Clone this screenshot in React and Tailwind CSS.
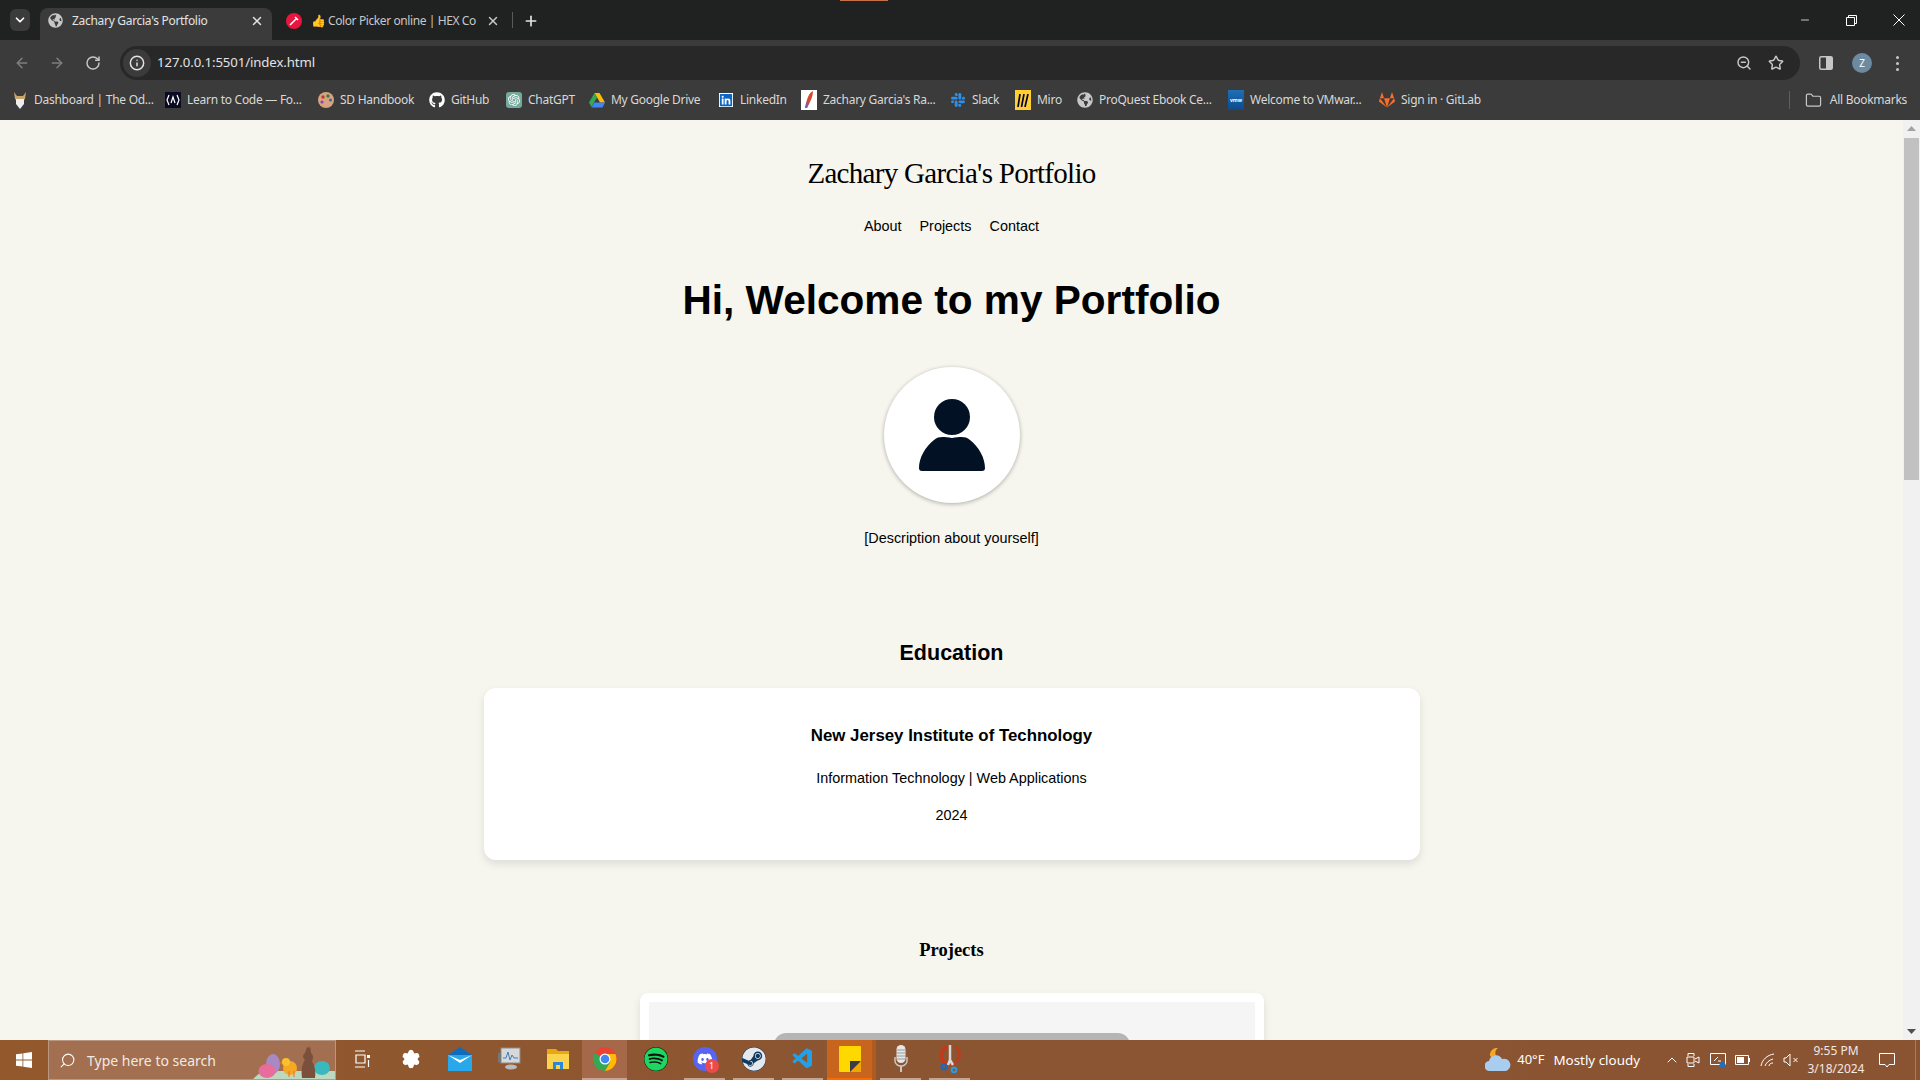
import { ArrowLeft, ArrowRight, RotateCw, Info, ZoomOut, Star, X, Plus, ChevronDown, Minus, Folder, ChevronUp, Search, Settings } from 'lucide-react';
import { FaGithub, FaSteam, FaSpotify, FaDiscord, FaLinkedin, FaSlack, FaGitlab, FaGlobeAmericas } from 'react-icons/fa';
import { VscVscode } from 'react-icons/vsc';
import { SiOpenai } from 'react-icons/si';

const uiFont = 'font-["Noto_Sans",sans-serif]';

function Globe( { className } ) {
	return <FaGlobeAmericas className={ className } />;
}

function OdinIcon() {
	return (
		<svg width="16" height="18" viewBox="0 0 16 18">
			<path d="M2 1l3 4h6l3-4-1 7-2 2H5L3 8z" fill="#c9a56a" />
			<path d="M4 8h8v5l-4 5-4-5z" fill="#eee" />
		</svg>
	);
}

function FccIcon() {
	return (
		<div className="w-4 h-4 bg-[#0a0a23] flex items-center justify-center">
			<svg width="14" height="12" viewBox="0 0 14 12" fill="none" stroke="#fff" strokeWidth="1.2">
				<path d="M3 1 1 6l2 5M11 1l2 5-2 5M5 9l2-6 2 6" />
			</svg>
		</div>
	);
}

function PaletteIcon() {
	return (
		<svg width="16" height="16" viewBox="0 0 16 16">
			<circle cx="8" cy="8" r="8" fill="#d8a37f" />
			<circle cx="5" cy="5" r="1.7" fill="#c0392b" />
			<circle cx="10" cy="4" r="1.7" fill="#3d7a3d" />
			<circle cx="12.5" cy="8" r="1.6" fill="#3a6ab0" />
			<circle cx="4" cy="10" r="1.6" fill="#8a4a9a" />
		</svg>
	);
}

function ChatGptIcon() {
	return (
		<div className="w-4 h-4 rounded-[3px] bg-[#74aa9c] flex items-center justify-center">
			<SiOpenai className="w-3 h-3 text-white" />
		</div>
	);
}

function DriveIcon() {
	return (
		<svg width="16" height="15" viewBox="0 0 16 15">
			<path d="M5.5 0h5l5.5 9.5h-5z" fill="#fbbc04" />
			<path d="M5.5 0 0 9.5 2.500 14l5.500-9.500z" fill="#34a853" />
			<path d="M2.500 14.500h11l2.500-5H5.300z" fill="#4285f4" />
		</svg>
	);
}

function FeatherIcon() {
	return (
		<div className="w-4 h-5 bg-white flex items-center justify-center">
			<svg width="10" height="18" viewBox="0 0 10 18">
				<path d="M9 0C5 2 3 7 1 17l2 0C6 11 9 6 9 0z" fill="#d9482b" />
				<path d="M3 10 1 17l2 0 2-5z" fill="#7a5aa6" />
			</svg>
		</div>
	);
}

function MiroIcon() {
	return (
		<div className="w-4 h-5 bg-[#ffd02f] flex items-center justify-center">
			<svg width="12" height="13" viewBox="0 0 12 13" fill="none" stroke="#050038" strokeWidth="1.7">
				<path d="M3 0 1 13M7 0 4.500 13M11 0 8 13" />
			</svg>
		</div>
	);
}

function VmwareIcon() {
	return (
		<div className="w-4 h-5 bg-gradient-to-b from-[#1d6fb8] to-[#0d4a8a] flex items-center justify-center">
			<span className="text-[5px] font-bold leading-none text-white">vmw</span>
		</div>
	);
}

const bookmarks = [
	{ label: 'Dashboard | The Od...', icon: <OdinIcon />, width: 'w-[153px]' },
	{ label: 'Learn to Code — Fo...', icon: <FccIcon />, width: 'w-[153px]' },
	{ label: 'SD Handbook', icon: <PaletteIcon />, width: 'w-[111px]' },
	{ label: 'GitHub', icon: <FaGithub className="w-4 h-4 text-white" />, width: 'w-[77px]' },
	{ label: 'ChatGPT', icon: <ChatGptIcon />, width: 'w-[83px]' },
	{ label: 'My Google Drive', icon: <DriveIcon />, width: 'w-[129px]' },
	{ label: 'LinkedIn', icon: <FaLinkedin className="w-[14px] h-[14px] text-[#0a66c2] bg-white" />, width: 'w-[83px]' },
	{ label: "Zachary Garcia's Ra...", icon: <FeatherIcon />, width: 'w-[149px]' },
	{ label: 'Slack', icon: <FaSlack className="w-4 h-4 text-[#2f8fe6]" />, width: 'w-[65px]' },
	{ label: 'Miro', icon: <MiroIcon />, width: 'w-[62px]' },
	{ label: 'ProQuest Ebook Ce...', icon: <Globe className="w-4 h-4 text-[#c7c7c7]" />, width: 'w-[151px]' },
	{ label: 'Welcome to VMwar...', icon: <VmwareIcon />, width: 'w-[151px]' },
	{ label: 'Sign in · GitLab', icon: <FaGitlab className="w-4 h-4 text-[#fc6d26]" />, width: 'w-[120px]' },
];

function TabBar() {
	return (
		<div className={ `h-10 bg-[#202221] flex items-end shrink-0 relative ${ uiFont }` }>
			<div className="absolute left-[840px] top-0 w-12 h-px bg-[#c4714a]" />
			<div className="h-10 pl-[10px] pr-[10px] flex items-center">
				<div className="w-5 h-[22px] rounded-md bg-[#3b3b3b] flex items-center justify-center">
					<ChevronDown className="w-3.5 h-3.5 text-white" strokeWidth={ 3 } />
				</div>
			</div>
			<div className="w-[232px] h-8 bg-[#3b3b3b] rounded-t-lg flex items-center pl-[8px] pr-[8px] pb-[7px]">
				<Globe className="w-[15px] h-[15px] text-[#c7c7c7] shrink-0" />
				<span className="ml-[9px] text-[12px] tracking-[-0.3px] text-[#e3e3e3] flex-1 truncate">Zachary Garcia's Portfolio</span>
				<X className="w-3.5 h-3.5 text-[#e3e3e3]" strokeWidth={ 2.5 } />
			</div>
			<div className="w-[240px] h-8 flex items-center pl-[14px] pr-[12px] pb-[7px]">
				<div className="w-4 h-4 rounded-full bg-[#e8153f] flex items-center justify-center shrink-0">
					<svg width="10" height="10" viewBox="0 0 10 10" fill="none" stroke="#fff" strokeWidth="1.6"><path d="M1 9 7 3M6 1l3 3" /></svg>
				</div>
				<span className="ml-[9px] text-[12px]">👍</span>
				<span className="ml-[2px] text-[12px] tracking-[-0.4px] text-[#c7c7c7] whitespace-nowrap">Color Picker online | HEX Co</span>
				<X className="w-3.5 h-3.5 text-[#c7c7c7] ml-auto" strokeWidth={ 2.5 } />
			</div>
			<div className="h-[16px] w-px bg-[#5a5a5a] mb-[12px]" />
			<div className="h-8 flex items-center ml-[10px] pb-[7px]">
				<Plus className="w-4 h-4 text-[#e3e3e3]" strokeWidth={ 2.5 } />
			</div>
			<div className="ml-auto h-10 flex items-center pr-[15px] text-white">
				<Minus className="w-3 h-3" strokeWidth={ 1.5 } />
				<svg className="ml-[35px]" width="11" height="11" viewBox="0 0 11 11" fill="none" stroke="#fff"><path d="M.5 2.500h8v8h-8zM2.500 2.500v-2h8v8h-2" /></svg>
				<svg className="ml-[36px]" width="12" height="12" viewBox="0 0 12 12" fill="none" stroke="#fff"><path d="M.5.5l11 11M11.500.5l-11 11" /></svg>
			</div>
		</div>
	);
}

function Toolbar() {
	return (
		<div className={ `h-[41px] bg-[#3b3b3b] flex items-center shrink-0 pl-[14px] pt-[5px] ${ uiFont }` }>
			<ArrowLeft className="w-4 h-4 text-[#7f7f7f]" strokeWidth={ 2.2 } />
			<ArrowRight className="w-4 h-4 text-[#7f7f7f] ml-[19px]" strokeWidth={ 2.2 } />
			<RotateCw className="w-4 h-4 text-[#c7c7c7] ml-[20px]" strokeWidth={ 2.2 } />
			<div className="ml-[19px] w-[1680px] h-[34px] rounded-full bg-[#282828] flex items-center pl-[3px] pr-[16px]">
				<div className="w-7 h-7 rounded-full bg-[#3b3b3b] flex items-center justify-center">
					<Info className="w-4 h-4 text-[#e3e3e3]" strokeWidth={ 2.2 } />
				</div>
				<span className="ml-[6px] text-[13.2px] tracking-[-0.1px] text-[#e3e3e3]">127.0.0.1:5501/index.html</span>
				<ZoomOut className="w-4 h-4 text-[#c7c7c7] ml-auto" strokeWidth={ 2.2 } />
				<Star className="w-4 h-4 text-[#c7c7c7] ml-[16px]" strokeWidth={ 2.2 } />
			</div>
			<svg className="ml-[19px]" width="14" height="14" viewBox="0 0 14 14">
				<rect x=".75" y=".75" width="12.500" height="12.500" rx="1.500" fill="none" stroke="#c7c7c7" strokeWidth="1.500" />
				<rect x="7" y="1" width="6" height="12" fill="#c7c7c7" />
			</svg>
			<div className="ml-[19px] w-5 h-5 rounded-full bg-[#6c8aa0] text-white text-[10px] flex items-center justify-center">Z</div>
			<div className="ml-[24px] flex flex-col gap-[3px]">
				<span className="w-[3px] h-[3px] rounded-full bg-[#c7c7c7]" />
				<span className="w-[3px] h-[3px] rounded-full bg-[#c7c7c7]" />
				<span className="w-[3px] h-[3px] rounded-full bg-[#c7c7c7]" />
			</div>
		</div>
	);
}

function BookmarksBar() {
	return (
		<div className={ `h-[39px] bg-[#3b3b3b] flex items-center shrink-0 pl-3 border-b border-[#3b3b3b] ${ uiFont }` }>
			{ bookmarks.map( ( b ) => (
				<div key={ b.label } className={ `${ b.width } flex items-center shrink-0` }>
					<div className="w-4 flex justify-center shrink-0">{ b.icon }</div>
					<span className="ml-[6px] text-[12px] tracking-[-0.27px] text-[#d8d8d8] whitespace-nowrap">{ b.label }</span>
				</div>
			) ) }
			<div className="ml-auto w-px h-[18px] bg-[#5f5f5f]" />
			<Folder className="w-[17px] h-[17px] text-[#c7c7c7] ml-[15px]" strokeWidth={ 1.7 } />
			<span className="ml-[8px] mr-[13px] text-[12px] tracking-[-0.27px] text-[#d8d8d8] whitespace-nowrap">All Bookmarks</span>
		</div>
	);
}

function Avatar() {
	return (
		<div className="w-[136px] h-[136px] rounded-full bg-white shadow-[0_1px_4px_rgba(0,0,0,0.3)] flex items-center justify-center">
			<svg width="68" height="72" viewBox="0 0 68 72" fill="#021224">
				<ellipse cx="34" cy="18" rx="18" ry="18" />
				<path d="M16 41c5-4 9-3 18-2 9-1 13-2 18 2 9 7 15 18 15 28 0 2-1 3-3 3H4c-2 0-3-1-3-3 0-10 6-21 15-28z" />
			</svg>
		</div>
	);
}

function PageContent() {
	return (
		<div className="flex-1 min-w-0 h-full overflow-hidden bg-[#f6f5ee] font-['Liberation_Sans',sans-serif] text-black flex flex-col items-center">
			<h1 className="mt-[33px] text-[29px] leading-[40px] font-['Liberation_Serif',serif] tracking-[-0.7px]">Zachary Garcia's Portfolio</h1>
			<nav className="mt-[24px] flex gap-[18px] text-[14.4px] leading-[18px]">
				<span>About</span>
				<span>Projects</span>
				<span>Contact</span>
			</nav>
			<h2 className="mt-[40px] text-[40.6px] leading-[50px] font-bold">Hi, Welcome to my Portfolio</h2>
			<div className="mt-[42px]"><Avatar /></div>
			<p className="mt-[26px] text-[14.4px] leading-[18px]">[Description about yourself]</p>
			<h3 className="mt-[92px] text-[21.5px] leading-[28px] font-bold">Education</h3>
			<div className="mt-[21px] w-[936px] h-[172px] shrink-0 bg-white rounded-xl shadow-[0_4px_8px_rgba(0,0,0,0.1)] flex flex-col items-center">
				<h4 className="mt-[37px] text-[16.85px] leading-[22px] font-bold">New Jersey Institute of Technology</h4>
				<p className="mt-[22px] text-[14.4px] leading-[18px]">Information Technology | Web Applications</p>
				<p className="mt-[19px] text-[14.4px] leading-[18px]">2024</p>
			</div>
			<h3 className="mt-[76px] text-[18.5px] leading-[28px] font-['Liberation_Serif',serif] font-bold">Projects</h3>
			<div className="mt-[29px] w-[624px] h-[200px] shrink-0 bg-white rounded-lg p-[9px] shadow-[0_4px_8px_rgba(0,0,0,0.1)]">
				<div className="h-full bg-[#f5f5f5] pt-[31px] flex justify-center">
					<div className="w-[356px] h-[100px] bg-[#b5b5b5] rounded-t-xl" />
				</div>
			</div>
		</div>
	);
}

function Scrollbar() {
	return (
		<div className="w-[17px] h-full bg-[#f1f1f1] flex flex-col items-center shrink-0">
			<svg className="mt-[6px]" width="9" height="5" viewBox="0 0 9 5"><path d="M4.500 0 9 5H0z" fill="#a3a3a3" /></svg>
			<div className="mt-[7px] w-[15px] h-[342px] bg-[#c1c1c1]" />
			<svg className="mt-auto mb-[6px]" width="9" height="5" viewBox="0 0 9 5"><path d="M4.500 5 9 0H0z" fill="#505050" /></svg>
		</div>
	);
}

function WinLogo() {
	return (
		<svg width="16" height="16" viewBox="0 0 16 16" fill="#fff">
			<path d="M0 2.300 6.500 1.400v6.200H0zM7.300 1.300 16 0v7.600H7.300zM0 8.400h6.500v6.200L0 13.700zM7.300 8.400H16V16l-8.700-1.200z" />
		</svg>
	);
}

function EasterArt() {
	return (
		<svg className="absolute right-0 bottom-0" width="85" height="39" viewBox="0 0 85 39">
			<path d="M3 39 12 31H85V39z" fill="#bcd9c0" />
			<ellipse cx="23" cy="24" rx="7" ry="10" fill="#a78ac4" />
			<ellipse cx="17" cy="31" rx="8.500" ry="7" fill="#e86d9a" />
			<ellipse cx="72" cy="28" rx="8" ry="7" fill="#39b8c0" />
			<ellipse cx="40" cy="28" rx="7" ry="7" fill="#f7a823" />
			<circle cx="36" cy="22" r="4" fill="#fbc02d" />
			<path d="M32 21l-3 2 3 1z" fill="#e8702a" />
			<path d="M39 31v6M44 31v6" stroke="#e8702a" strokeWidth="1" />
			<path d="M52 38c-1-8 0-14 3-18-2-2-3-5 0-7l2-6 2 1 1-2 1 7c3 3 2 6 1 8 3 5 4 12 3 17z" fill="#7a4f3c" />
		</svg>
	);
}

function TaskView() {
	return (
		<svg width="16" height="18" viewBox="0 0 16 18" fill="none" stroke="#fff" strokeWidth="1.200">
			<path d="M1 1h10M1 17h10M2 5h9v8H2z" />
			<rect x="13" y="5" width="3" height="3" fill="#fff" stroke="none" />
			<path d="M14.500 10v7" />
		</svg>
	);
}

function MailIcon() {
	return (
		<svg width="24" height="24" viewBox="0 0 24 24">
			<path d="M12 0 24 8v16H0V8z" fill="#0f6cbd" />
			<path d="M0 8h24v16H0z" fill="#28a8ea" />
			<path d="M0 8l12 8 12-8-12 5z" fill="#fff" />
		</svg>
	);
}

function TaskMgrIcon() {
	return (
		<svg width="24" height="24" viewBox="0 0 24 24">
			<rect x="4" y="1" width="19" height="15" fill="#d8d8d8" stroke="#8b8b8b" />
			<path d="M6 11h3l2-6 2 8 2-5 2 3h4" fill="none" stroke="#3a7fc0" />
			<ellipse cx="14" cy="20" rx="6" ry="2.500" fill="#bbb" />
			<path d="M1 6l3-1v12l-3-2z" fill="#777" />
		</svg>
	);
}

function ExplorerIcon() {
	return (
		<svg width="22" height="22" viewBox="0 0 22 22">
			<path d="M0 1h9l2 2h11v17H0z" fill="#e8a90e" />
			<path d="M0 6h22v15H0z" fill="#fcd34d" />
			<path d="M6 14h10v7H6z" fill="#2b88d8" />
			<rect x="9" y="17" width="4" height="4" fill="#fcd34d" />
		</svg>
	);
}

function ChromeIcon() {
	return (
		<svg width="24" height="24" viewBox="0 0 24 24">
			<circle cx="12" cy="12" r="12" fill="#ea4335" />
			<path d="M12 12 1.600 6A12 12 0 0 0 12 24l5.200-9z" fill="#34a853" />
			<path d="M12 7h10.400A12 12 0 0 1 12 24l5.200-9z" fill="#fbbc04" />
			<circle cx="12" cy="12" r="5.500" fill="#fff" />
			<circle cx="12" cy="12" r="4.300" fill="#4285f4" />
		</svg>
	);
}

function StickyIcon() {
	return (
		<svg width="22" height="26" viewBox="0 0 22 26">
			<rect width="22" height="26" rx="1" fill="#ffd800" />
			<path d="M11 26V17l11-1v10z" fill="#f0a800" />
			<path d="M11 26V15h11z" fill="#3c3c40" />
		</svg>
	);
}

function MicIcon() {
	return (
		<svg width="14" height="28" viewBox="0 0 14 28">
			<path d="M1 12v4c0 3 3 5 6 5s6-2 6-5v-4" fill="none" stroke="#c8c8c8" strokeWidth="1.500" />
			<rect x="2.500" y="0" width="9" height="18" rx="4.500" fill="#e6e6e6" />
			<path d="M3 5h8M3 8h8M3 11h8M3 14h8" stroke="#9a9a9a" />
			<rect x="6" y="21" width="2" height="6" fill="#c8c8c8" />
		</svg>
	);
}

function SnipIcon() {
	return (
		<svg width="22" height="28" viewBox="0 0 22 28" fill="none">
			<path d="M8 2a9 9 0 1 0 8 16" stroke="#c8371a" strokeWidth="3" />
			<path d="M16 2a9 9 0 0 1 1 15" stroke="#b5401f" strokeWidth="3" />
			<path d="M11 0v15l-2 5M11 15l3 5" stroke="#d8d8d8" strokeWidth="2.500" />
			<circle cx="5" cy="22" r="2.500" stroke="#1769c4" strokeWidth="2.200" />
			<circle cx="15" cy="25" r="2.300" stroke="#2b9ae0" strokeWidth="2.200" />
		</svg>
	);
}

const taskItems = [
	{ key: 'task', icon: <TaskView /> },
	{ key: 'settings', icon: <Settings className="w-5 h-5 text-white fill-white" strokeWidth={ 2 } /> },
	{ key: 'mail', icon: <MailIcon /> },
	{ key: 'taskmgr', icon: <TaskMgrIcon /> },
	{ key: 'explorer', icon: <ExplorerIcon /> },
	{ key: 'chrome', icon: <ChromeIcon />, state: 'hot' },
	{ key: 'spotify', icon: <FaSpotify className="w-6 h-6 text-[#1ed760] bg-[#101010] rounded-full" /> },
	{ key: 'discord', icon: (
		<div className="relative w-6 h-6 rounded-full bg-[#5865f2] flex items-center justify-center">
			<FaDiscord className="w-4 h-4 text-white" />
			<span className="absolute -right-[2px] -bottom-[2px] w-[14px] h-[14px] rounded-full bg-[#ed4b4b] text-white text-[9px] leading-[14px] text-center">1</span>
		</div>
	), state: 'open' },
	{ key: 'steam', icon: <FaSteam className="w-6 h-6 text-[#e4e9ef] bg-[#123a5f] rounded-full" />, state: 'open' },
	{ key: 'vscode', icon: <VscVscode className="w-6 h-6 text-[#22a0e8]" />, state: 'open' },
	{ key: 'sticky', icon: <StickyIcon />, state: 'active' },
	{ key: 'mic', icon: <MicIcon />, state: 'open' },
	{ key: 'snip', icon: <SnipIcon />, state: 'open' },
];

function TaskItem( { item } ) {
	let bg = '';
	let bar = 'bg-transparent';
	if ( item.state === 'hot' ) {
		bg = 'bg-[#a5694a] border-r-[4px] border-[#8f5635]';
		bar = 'bg-[#c7a391]';
	} else if ( item.state === 'active' ) {
		bg = 'bg-[#c7651f] border-r-[4px] border-[#b05a1e]';
		bar = 'bg-[#ff6a00]';
	} else if ( item.state === 'open' ) {
		bar = 'bg-[#c7a391] mx-[4px]';
	}
	return (
		<div className={ `w-[49px] h-10 flex flex-col shrink-0 ${ bg }` }>
			<div className="flex-1 flex items-center justify-center">{ item.icon }</div>
			<div className={ `h-[2px] ${ bar }` } />
		</div>
	);
}

function WeatherIcon() {
	return (
		<svg width="26" height="24" viewBox="0 0 26 24">
			<path d="M13 0a7 7 0 0 0-8 8 7 7 0 0 0 8 2 6 6 0 0 1 0-10z" fill="#f5a623" />
			<path d="M5 23a5 5 0 0 1-1-10 7 7 0 0 1 13-2 6 6 0 0 1 4 12z" fill="#a9cdee" />
		</svg>
	);
}

function Taskbar() {
	return (
		<div className={ `h-10 shrink-0 flex items-center bg-gradient-to-r from-[#93592c] via-[#8b5532] to-[#8a5433] text-white ${ uiFont }` }>
			<div className="w-[48px] flex justify-center shrink-0"><WinLogo /></div>
			<div className="relative w-[288px] h-10 bg-[#a26f50] border border-[#bb9781] flex items-center pl-[10px] overflow-hidden shrink-0">
				<Search className="w-[17px] h-[17px] text-white -scale-x-100" strokeWidth={ 1.5 } />
				<span className="ml-[11px] text-[14px] text-[#f3e9e2]">Type here to search</span>
				<EasterArt />
			</div>
			<div className="flex shrink-0 ml-[1px]">
				{ taskItems.map( ( item ) => <TaskItem key={ item.key } item={ item } /> ) }
			</div>
			<div className="ml-auto flex items-center h-10">
				<WeatherIcon />
				<span className="ml-[6px] text-[13px]">40°F</span>
				<span className="ml-[9px] text-[13.4px]">Mostly cloudy</span>
				<ChevronUp className="w-4 h-4 ml-[24px]" strokeWidth={ 1.5 } />
				<svg className="ml-[6px]" width="14" height="16" viewBox="0 0 14 16" fill="none" stroke="#fff"><path d="M2 4V1.500h6V4M2 12v2.500h6V12M1 5h7v6H1zM9 7l4-2v6l-4-2" /></svg>
				<svg className="ml-[10px]" width="16" height="15" viewBox="0 0 16 15" fill="none" stroke="#fff"><path d="M.5.500h15v11H.5zM4 8l4-4M8 8h3" /><circle cx="12.500" cy="12" r="3" fill="#1f6fc0" stroke="none" /></svg>
				<svg className="ml-[9px]" width="16" height="10" viewBox="0 0 16 10" fill="none" stroke="#fff"><path d="M.5.500h13v9H.5z" /><path d="M14.500 3v4" /><rect x="2" y="2" width="7" height="6" fill="#fff" stroke="none" /></svg>
				<svg className="ml-[9px]" width="16" height="14" viewBox="0 0 16 14" fill="none" stroke="#fff"><path d="M1 13C2 7 7 2 14 1M5 13c1-3 4-6 8-7M9 13c0-2 2-3 4-3" /></svg>
				<svg className="ml-[7px]" width="16" height="14" viewBox="0 0 16 14" fill="none" stroke="#fff"><path d="M1 5v4h2l4 4V1L3 5zM10.500 5l4 4M14.500 5l-4 4" /></svg>
				<div className="ml-[1px] w-[72px] flex flex-col items-center text-[12px] leading-[18px] text-[#f3e9e2]">
					<span>9:55 PM</span>
					<span>3/18/2024</span>
				</div>
				<svg className="ml-[7px]" width="16" height="15" viewBox="0 0 16 15" fill="none" stroke="#fff"><path d="M.5.500h15v11H10l-2 2.500L6 11.500H.5z" /></svg>
				<div className="ml-[20px] mr-[4px] w-px h-10 bg-[#a97a5d]" />
			</div>
		</div>
	);
}

export default function App() {
	return (
		<div className="w-[1920px] h-[1080px] flex flex-col overflow-hidden">
			<TabBar />
			<Toolbar />
			<BookmarksBar />
			<div className="flex-1 min-h-0 flex">
				<PageContent />
				<Scrollbar />
			</div>
			<Taskbar />
		</div>
	);
}
